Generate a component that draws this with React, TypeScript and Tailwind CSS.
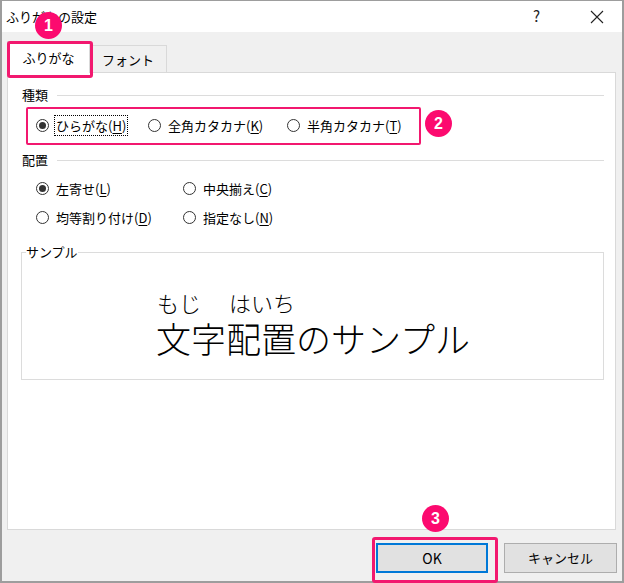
import React from "react";

const FONT = { fontFamily: '"Noto Sans CJK JP", "Noto Sans", sans-serif' };

const Radio = ({ checked }: { checked?: boolean }) => (
  <span className="w-[13px] h-[13px] rounded-full border border-[#333] bg-white flex items-center justify-center shrink-0">
    {checked && <span className="w-[7px] h-[7px] rounded-full bg-[#333]" />}
  </span>
);

const Option = ({
  label,
  keyChar,
  checked,
  focused,
  width,
}: {
  label: string;
  keyChar: string;
  checked?: boolean;
  focused?: boolean;
  width: string;
}) => (
  <div className={`flex items-center h-[20px] ${width}`}>
    <Radio checked={checked} />
    <span
      className={`ml-[6px] px-px leading-[19px] text-[13px] text-black whitespace-nowrap ${
        focused ? "outline outline-1 outline-dotted outline-black" : ""
      }`}
    >
      {label}(<span className="underline underline-offset-2">{keyChar}</span>)
    </span>
  </div>
);

const GroupLabel = ({ text }: { text: string }) => (
  <div className="flex items-center h-[18px]">
    <span className="text-[13px] leading-[18px] text-black">{text}</span>
    <div className="flex-1 h-px bg-[#dcdcdc] ml-[9px]" />
  </div>
);

const Badge = ({ n, className }: { n: string; className: string }) => (
  <div
    className={`absolute w-[27px] h-[27px] rounded-full bg-[#fc0a6f] text-white text-[16px] font-bold flex items-center justify-center ${className}`}
    style={{ fontFamily: '"Liberation Sans", Arial, sans-serif' }}
  >
    {n}
  </div>
);

export default function App() {
  return (
    <div
      className="relative w-[624px] h-[583px] flex flex-col border border-[#9d9d9d] border-l-2 border-r-2 border-b-2 bg-white"
      style={FONT}
    >
      {/* title bar */}
      <div className="h-[31px] shrink-0 flex items-center bg-white pl-[4px]">
        <span className="text-[13px] text-black">ふりがなの設定</span>
        <div className="flex-1" />
        <span className="text-[15px] text-[#222] mr-[50px]">?</span>
        <svg width="14" height="14" viewBox="0 0 14 14" className="mr-[18px]">
          <path d="M1 1 L13 13 M13 1 L1 13" stroke="#222" strokeWidth="1.1" />
        </svg>
      </div>

      {/* body */}
      <div className="flex-1 bg-[#f0f0f0] pl-[5px] pr-[6px] pt-[10px] flex flex-col">
        {/* tabs */}
        <div className="flex items-end h-[30px]">
          <div className="relative z-10 w-[83px] h-[32px] -mb-px bg-white border border-[#d9d9d9] border-b-0 flex items-center justify-center text-[13px] text-black">
            ふりがな
          </div>
          <div className="w-[77px] h-[27px] bg-[#f0f0f0] border border-[#d9d9d9] border-l-0 border-b-0 flex items-center justify-center text-[13px] text-black pt-px">
            フォント
          </div>
        </div>

        {/* panel */}
        <div className="h-[458px] bg-white border border-[#d9d9d9] pl-[14px] pr-[11px] pt-[13px] flex flex-col">
          <GroupLabel text="種類" />
          <div className="flex mt-[11px] pl-[14px]">
            <Option label="ひらがな" keyChar="H" checked focused width="w-[112px]" />
            <Option label="全角カタカナ" keyChar="K" width="w-[139px]" />
            <Option label="半角カタカナ" keyChar="T" width="w-[130px]" />
          </div>

          <div className="mt-[16px]">
            <GroupLabel text="配置" />
          </div>
          <div className="flex mt-[9px] pl-[14px]">
            <Option label="左寄せ" keyChar="L" checked width="w-[147px]" />
            <Option label="中央揃え" keyChar="C" width="w-[120px]" />
          </div>
          <div className="flex mt-[9px] pl-[14px]">
            <Option label="均等割り付け" keyChar="D" width="w-[147px]" />
            <Option label="指定なし" keyChar="N" width="w-[120px]" />
          </div>

          <fieldset className="mt-[16px] -ml-px h-[137px] border border-[#dcdcdc] px-[4px]">
            <legend className="text-[13px] leading-[18px] text-black px-0">サンプル</legend>
            <div className="pl-[131px] pt-[28px] text-black font-light">
              <div className="flex text-[22px] leading-[26px]">
                <span className="w-[72px]">もじ</span>
                <span>はいち</span>
              </div>
              <div className="text-[35px] leading-[40px] mt-[3px] -ml-[1px]">文字配置のサンプル</div>
            </div>
          </fieldset>
        </div>

        {/* buttons */}
        <div className="flex justify-end mt-[13px] -mr-px">
          <button className="w-[112px] h-[30px] bg-[#e1e1e1] border-2 border-[#0078d7] text-[14px] text-black">
            OK
          </button>
          <button className="ml-[16px] w-[113px] h-[30px] bg-[#e1e1e1] border border-[#adadad] text-[13px] text-black">
            キャンセル
          </button>
        </div>
      </div>

      {/* annotations */}
      <div className="absolute left-[5px] top-[40px] w-[86px] h-[37px] border-[3px] border-[#f2186f] rounded-[3px] z-20" />
      <div className="absolute left-[24px] top-[106px] w-[395px] h-[38px] border-[2px] border-[#f2186f] rounded-[2px] z-20" />
      <div className="absolute left-[370px] top-[536px] w-[126px] h-[46px] border-[3px] border-[#f2186f] rounded-[3px] z-20" />
      <Badge n="1" className="left-[33px] top-[11px] z-30" />
      <Badge n="2" className="left-[423px] top-[109px] z-30" />
      <Badge n="3" className="left-[420px] top-[504px] z-30" />
    </div>
  );
}
